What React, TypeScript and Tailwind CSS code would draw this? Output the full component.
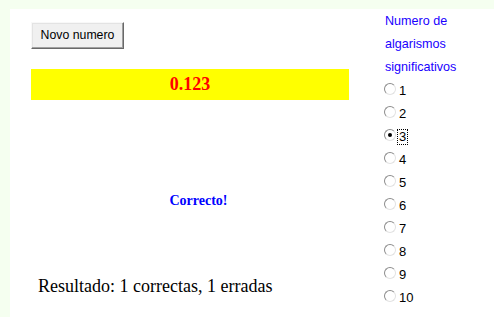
import React from "react";

const opts = [1, 2, 3, 4, 5, 6, 7, 8, 9, 10];

export default function App() {
  return (
    <div className="w-[494px] h-[317px] bg-[#f5fff0] pl-[10px] pt-[9px] overflow-hidden">
      <div className="w-full h-full bg-white flex">
        <div className="w-[318px] ml-[21px] pt-[12px] flex flex-col">
          <div>
            <button
              className="h-[27px] w-[93px] bg-[#f0f0f0] text-[12.3px] text-black border border-t-[#f8f8f8] border-l-[#f8f8f8] border-r-[#696969] border-b-[#696969] shadow-[inset_-1px_-1px_0_#a0a0a0,inset_1px_1px_0_#e3e3e3]"
              style={{ fontFamily: '"Liberation Sans", Arial, sans-serif' }}
            >
              Novo numero
            </button>
          </div>
          <div
            className="mt-[20px] h-[31px] bg-[#ffff00] flex items-center justify-center text-[18px] font-bold text-[#ff0000]"
            style={{ fontFamily: '"Liberation Serif", "Times New Roman", serif' }}
          >
            0.123
          </div>
          <div
            className="mt-[93px] h-[16px] leading-[16px] text-center text-[14px] font-bold text-[#0000ff] pl-[17px]"
            style={{ fontFamily: '"Liberation Serif", "Times New Roman", serif' }}
          >
            Correcto!
          </div>
          <div
            className="mt-[67px] h-[20px] leading-[20px] text-[18px] text-black pl-[7px] whitespace-nowrap"
            style={{ fontFamily: '"Liberation Serif", "Times New Roman", serif' }}
          >
            Resultado: 1 correctas, 1 erradas
          </div>
        </div>
        <div
          className="ml-[35px] pt-[1px] text-[13px] leading-[23px]"
          style={{ fontFamily: '"Liberation Sans", Arial, sans-serif' }}
        >
          <div className="text-[#1a00ff] pl-[1px] text-[12.6px]">
            <div>Numero de</div>
            <div>algarismos</div>
            <div>significativos</div>
          </div>
          {opts.map((n) => (
            <div key={n} className="flex items-center h-[23px] text-black">
              <span className="relative w-[12px] h-[12px] rounded-full bg-white border border-t-[#8c8c8c] border-l-[#8c8c8c] border-r-[#e2e2e2] border-b-[#e2e2e2] -mt-[3px] flex items-center justify-center">
                {n === 3 && <span className="w-[4px] h-[4px] rounded-full bg-black" />}
              </span>
              {n === 3 ? (
                <span className="ml-[2px] px-[1px] leading-[14px] outline outline-1 outline-dotted outline-black">{n}</span>
              ) : (
                <span className="ml-[3px]">{n}</span>
              )}
            </div>
          ))}
        </div>
      </div>
    </div>
  );
}
